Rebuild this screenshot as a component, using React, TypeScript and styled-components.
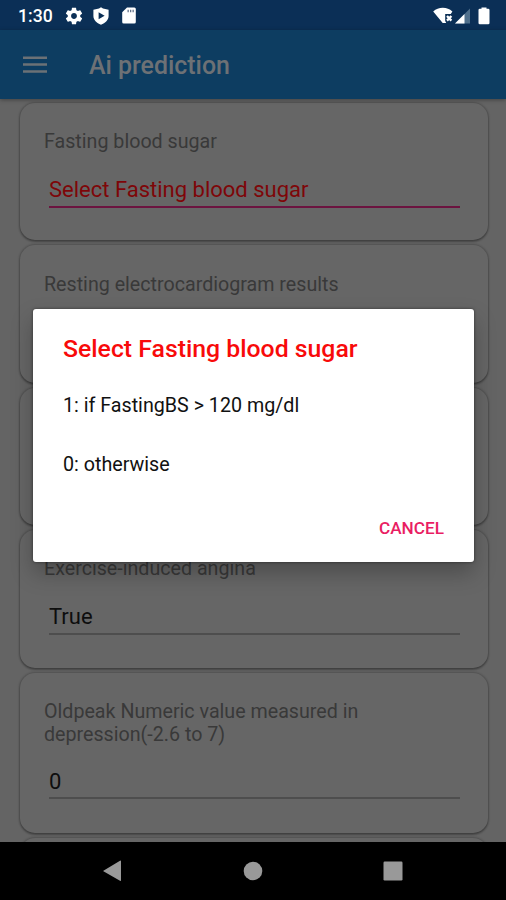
import React from "react";
import styled, { createGlobalStyle } from "styled-components";

const GlobalStyle = createGlobalStyle`
  * { box-sizing: border-box; }
  body { margin: 0; background: #000; font-family: Roboto, "Liberation Sans", sans-serif; }
`;

const Screen = styled.div`
  position: relative;
  display: flex;
  flex-direction: column;
  width: 506px;
  height: 900px;
  overflow: hidden;
  background: #646464;
`;

const StatusBar = styled.header`
  display: flex;
  flex: none;
  align-items: center;
  height: 30px;
  padding: 2px 16px 0 18px;
  background: #0b2f56;
  color: #fff;
`;

const Clock = styled.time`
  width: 46px;
  font-size: 17.6px;
  font-weight: 500;
  line-height: 28px;
`;

const StatusGroup = styled.div`
  display: flex;
  align-items: center;
  svg { display: block; }
`;

const Spacer = styled.div`
  flex: 1;
`;

const Toolbar = styled.div`
  position: relative;
  display: flex;
  flex: none;
  align-items: center;
  height: 69px;
  padding: 0 23px;
  gap: 42px;
  background: #0d3d61;
  box-shadow: 0 1px 4px rgba(0, 0, 0, 0.35);
  z-index: 1;
`;

const MenuButton = styled.button`
  display: flex;
  width: 24px;
  padding: 0;
  border: 0;
  background: none;
  color: #6b7176;
`;

const ToolbarTitle = styled.h1`
  margin: 0;
  padding-top: 2px;
  color: #6d7175;
  font-size: 24.9px;
  font-weight: 500;
  line-height: 30px;
`;

const Form = styled.main`
  display: flex;
  flex: 1;
  flex-direction: column;
  gap: 5px;
  min-height: 0;
  padding: 4px 18px 0 20px;
  overflow: hidden;
`;

const Card = styled.section<{ $tall?: boolean }>`
  flex: none;
  height: ${(p) => (p.$tall ? "160px" : "137.4px")};
  padding: 27.2px 28px 0 24px;
  border-radius: 15px;
  background: #666;
  box-shadow: 0 0 2px 1px rgba(0, 0, 0, 0.2), 0 2px 2px rgba(0, 0, 0, 0.24);
`;

const Label = styled.label`
  display: block;
  color: #393939;
  font-size: 19.67px;
  line-height: 23px;
`;

const Field = styled.div<{ $error?: boolean; $compact?: boolean }>`
  height: ${(p) => (p.$compact ? "41px" : "42px")};
  margin: ${(p) => (p.$compact ? "12px" : "13px")} 0 0 5px;
  padding-top: 11px;
  border-bottom: 2px solid ${(p) => (p.$error ? "#6c1440" : "#4e4e4e")};
  color: ${(p) => (p.$error ? "#7e0609" : "#0e0e0e")};
  font-size: 22px;
  line-height: 26px;
`;

const Dialog = styled.div`
  position: absolute;
  left: 33px;
  top: 309px;
  z-index: 2;
  display: flex;
  flex-direction: column;
  width: 441px;
  height: 253px;
  padding: 25px 30px 0;
  border-radius: 3px;
  background: #fff;
  box-shadow: 0 11px 22px rgba(0, 0, 0, 0.26), 0 0 3px rgba(0, 0, 0, 0.5);
`;

const DialogTitle = styled.h2`
  margin: 0 0 12px;
  color: #f80a0a;
  font-size: 24.8px;
  font-weight: 500;
  line-height: 30px;
`;

const Option = styled.button`
  height: 59px;
  padding: 0;
  border: 0;
  background: none;
  color: #111;
  font: 19.7px/59px Roboto, "Liberation Sans", sans-serif;
  text-align: left;
`;

const CancelButton = styled.button`
  align-self: flex-end;
  height: 44px;
  margin-top: 12px;
  padding: 0;
  border: 0;
  background: none;
  color: #e91e63;
  font: 500 17.2px/44px Roboto, "Liberation Sans", sans-serif;
`;

const NavigationBar = styled.nav`
  display: grid;
  flex: none;
  grid-template-columns: repeat(3, 140px);
  justify-content: center;
  place-items: center;
  height: 58px;
  background: #000;
  color: #999;
  svg { display: block; }
  svg:first-child { margin-right: 2px; }
`;

const fields = [
  { label: "Fasting blood sugar", value: "Select Fasting blood sugar", error: true },
  { label: "Resting electrocardiogram results", value: "" },
  { label: "", value: "" },
  { label: "Exercise-induced angina", value: "True" },
  { label: "Oldpeak Numeric value measured in depression(-2.6 to 7)", value: "0", tall: true },
  { label: "", value: "" },
];

const GearIcon = () => (
  <svg width="20" height="20" viewBox="0 0 24 24" fill="currentColor">
    <path d="M19.43 12.98c.04-.32.07-.64.07-.98s-.03-.66-.07-.98l2.11-1.65c.19-.15.24-.42.12-.64l-2-3.46c-.12-.22-.39-.3-.61-.22l-2.49 1c-.52-.4-1.08-.73-1.69-.98l-.38-2.65C14.46 2.18 14.25 2 14 2h-4c-.25 0-.46.18-.49.42l-.38 2.65c-.61.25-1.17.59-1.69.98l-2.49-1c-.23-.09-.49 0-.61.22l-2 3.46c-.13.22-.07.49.12.64l2.11 1.65c-.04.32-.07.65-.07.98s.03.66.07.98l-2.11 1.65c-.19.15-.24.42-.12.64l2 3.46c.12.22.39.3.61.22l2.49-1c.52.4 1.08.73 1.69.98l.38 2.65c.03.24.24.42.49.42h4c.25 0 .46-.18.49-.42l.38-2.65c.61-.25 1.17-.59 1.69-.98l2.49 1c.23.09.49 0 .61-.22l2-3.46c.12-.22.07-.49-.12-.64l-2.11-1.65zM12 15.5c-1.93 0-3.5-1.57-3.5-3.5s1.57-3.5 3.5-3.5 3.5 1.57 3.5 3.5-1.57 3.500-3.500 3.500z" />
  </svg>
);

const ShieldIcon = () => (
  <svg width="16" height="18" viewBox="0 0 16 18">
    <path d="M8 .2 10 1.5 15.6 2.7V9c0 4-3.2 7.2-7.6 8.8C3.600 16.200.4 13 .4 9V2.700L6 1.500Z" fill="currentColor" />
    <path d="M5.600 5.200v7L11.600 8.700Z" fill="#0b2f56" />
  </svg>
);

const CardIcon = () => (
  <svg width="14" height="17" viewBox="0 0 14 17">
    <path d="M5 .5h7.300Q13.800.5 13.800 2v13q0 1.500-1.500 1.500H1.700Q.2 16.500.2 15V5.300Z" fill="currentColor" />
    <path d="M5.500 2.700h1.300v2.500H5.500zm2.500 0h1.300v2.500H8zm2.500 0h1.300v2.500h-1.300z" fill="#64748b" />
  </svg>
);

const WifiIcon = () => (
  <svg width="20" height="17" viewBox="0 0 20 17">
    <path d="M.2 4.600C3 1.900 6 .8 9.800.8s6.800 1.100 9.600 3.800L17.800 7h-5.600v7l1 2H9.700Z" fill="currentColor" />
    <path d="m14 9 4.400 4.600m0-4.600L14 13.600" stroke="currentColor" strokeWidth="2.300" />
  </svg>
);

const SignalIcon = () => (
  <svg width="15" height="16" viewBox="0 0 15 16">
    <path d="M0 15.500 15 .5v15Z" fill="#50708c" />
    <path d="M0 15.500 9.500 6v9.500Z" fill="currentColor" />
  </svg>
);

const BatteryIcon = () => (
  <svg width="12" height="18" viewBox="0 0 12 18" fill="currentColor">
    <path d="M3.500 1.800V.4h5v1.400h1.700Q11.500 1.800 11.500 3.100v12.800q0 1.300-1.300 1.300H1.800Q.5 17.200.5 15.900V3.100q0-1.300 1.300-1.300Z" />
  </svg>
);

const LeftIcons = styled(StatusGroup)`
  padding-bottom: 1px;
  svg:nth-child(2) { margin-left: 9px; }
  svg:nth-child(3) { margin-left: 13px; }
`;

const RightIcons = styled(StatusGroup)`
  padding-bottom: 1px;
  svg:nth-child(2) { margin-left: 2px; }
  svg:nth-child(3) { margin-left: 8px; }
`;

export default function App() {
  return (
    <>
      <GlobalStyle />
      <Screen>
        <StatusBar>
          <Clock>1:30</Clock>
          <LeftIcons><GearIcon /><ShieldIcon /><CardIcon /></LeftIcons>
          <Spacer />
          <RightIcons><WifiIcon /><SignalIcon /><BatteryIcon /></RightIcons>
        </StatusBar>
        <Toolbar>
          <MenuButton aria-label="Open menu">
            <svg width="24" height="18" viewBox="0 0 24 18" fill="currentColor">
              <path d="M0 .5h24V3H0zm0 6.700h24v2.500H0zm0 7h24v2.500H0z" />
            </svg>
          </MenuButton>
          <ToolbarTitle>Ai prediction</ToolbarTitle>
        </Toolbar>
        <Form>
          {fields.map((field, index) => (
            <Card key={index} $tall={field.tall}>
              {field.label && <Label>{field.label}</Label>}
              {field.value && <Field $error={field.error} $compact={field.tall}>{field.value}</Field>}
            </Card>
          ))}
        </Form>
        <NavigationBar>
          <svg width="18" height="22" viewBox="0 0 18 22" fill="currentColor">
            <path d="M.4 10.700 17 .7q1-.5 1 .6v19q0 1.100-1 .5L.4 11.200q-.5-.2 0-.5Z" />
          </svg>
          <svg width="20" height="20" viewBox="0 0 20 20" fill="currentColor"><circle cx="10" cy="10" r="9.300" /></svg>
          <svg width="20" height="20" viewBox="0 0 20 20" fill="currentColor"><rect x=".5" y=".5" width="19" height="19" rx="1.200" /></svg>
        </NavigationBar>
        <Dialog role="dialog" aria-labelledby="dialog-title">
          <DialogTitle id="dialog-title">Select Fasting blood sugar</DialogTitle>
          <Option>1: if FastingBS &gt; 120 mg/dl</Option>
          <Option>0: otherwise</Option>
          <CancelButton>CANCEL</CancelButton>
        </Dialog>
      </Screen>
    </>
  );
}
